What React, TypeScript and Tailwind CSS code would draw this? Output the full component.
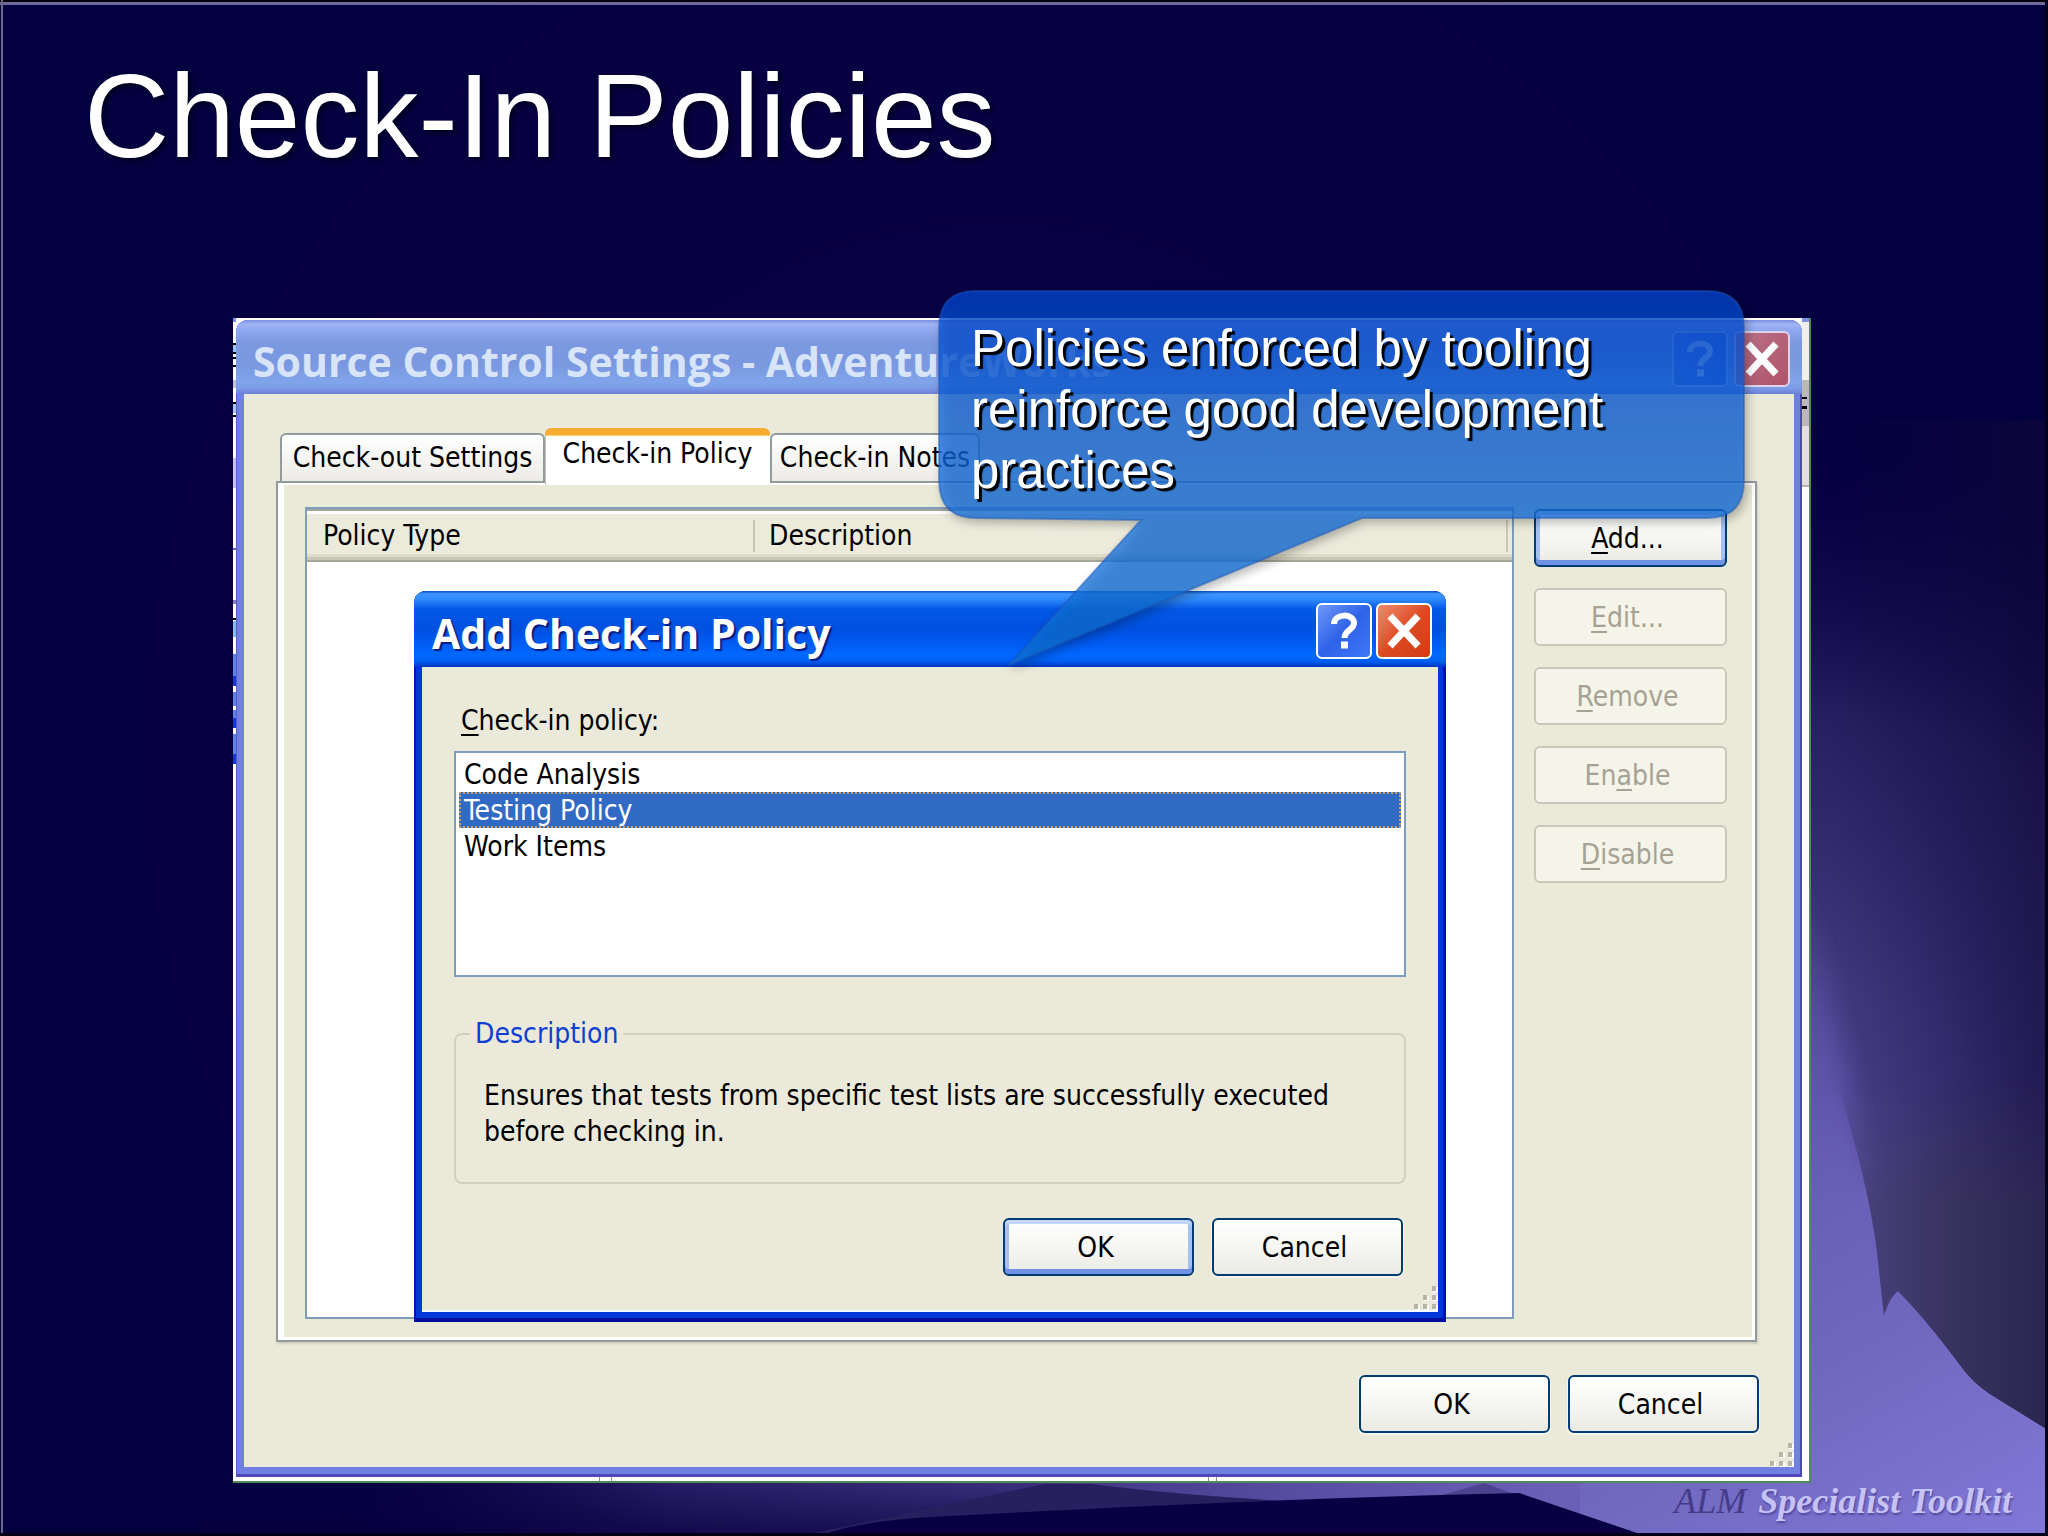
import { useState, type ReactNode } from "react";

const POLICIES = [
  { name: "Code Analysis", text: "Ensures that code analysis has been run with specific rules before checking in." },
  {
    name: "Testing Policy",
    text: "Ensures that tests from specific test lists are successfully executed before checking in.",
  },
  { name: "Work Items", text: "Ensures that work items are associated with the check-in." },
];

function Backdrop() {
  return (
    <svg
      className="absolute inset-0 h-full w-full"
      viewBox="0 0 2048 1536"
      preserveAspectRatio="none"
      aria-hidden="true"
    >
      <defs>
        <radialGradient id="mid" cx="1000" cy="760" r="950" gradientUnits="userSpaceOnUse">
          <stop offset="0" stopColor="#0c0048" />
          <stop offset="0.8" stopColor="#080041" />
          <stop offset="1" stopColor="#03003f" />
        </radialGradient>
        <radialGradient id="haze" cx="1790" cy="1220" r="780" gradientUnits="userSpaceOnUse">
          <stop offset="0" stopColor="#544c98" />
          <stop offset="0.3" stopColor="#423a80" />
          <stop offset="0.65" stopColor="#2a2262" stopOpacity="0.9" />
          <stop offset="1" stopColor="#0a0044" stopOpacity="0" />
        </radialGradient>
        <linearGradient id="shade" x1="1830" y1="0" x2="2048" y2="0" gradientUnits="userSpaceOnUse">
          <stop offset="0" stopColor="#120a40" stopOpacity="0" />
          <stop offset="1" stopColor="#100838" stopOpacity="0.6" />
        </linearGradient>
        <linearGradient id="slope" x1="1800" y1="1100" x2="2048" y2="1536" gradientUnits="userSpaceOnUse">
          <stop offset="0" stopColor="#635ab2" />
          <stop offset="0.5" stopColor="#7068be" />
          <stop offset="1" stopColor="#8278d8" />
        </linearGradient>
        <linearGradient id="light" x1="0" y1="840" x2="0" y2="1180" gradientUnits="userSpaceOnUse">
          <stop offset="0" stopColor="#665cb6" stopOpacity="0" />
          <stop offset="1" stopColor="#665cb6" />
        </linearGradient>
        <linearGradient id="slopeFade" x1="0" y1="1080" x2="0" y2="1200" gradientUnits="userSpaceOnUse">
          <stop offset="0" stopColor="#fff" stopOpacity="0" />
          <stop offset="1" stopColor="#fff" />
        </linearGradient>
        <mask id="fade" maskUnits="userSpaceOnUse" x="1400" y="1000" width="648" height="536">
          <rect x="1400" y="1000" width="648" height="536" fill="url(#slopeFade)" />
        </mask>
        <linearGradient id="hill" x1="1860" y1="0" x2="2048" y2="0" gradientUnits="userSpaceOnUse">
          <stop offset="0" stopColor="#48417c" />
          <stop offset="0.5" stopColor="#38325f" />
          <stop offset="1" stopColor="#2b2552" />
        </linearGradient>
        <linearGradient id="valley" x1="300" y1="0" x2="1040" y2="0" gradientUnits="userSpaceOnUse">
          <stop offset="0" stopColor="#0a0044" stopOpacity="0" />
          <stop offset="0.5" stopColor="#281e68" />
          <stop offset="1" stopColor="#3c3480" />
        </linearGradient>
        <linearGradient id="floor" x1="0" y1="1480" x2="0" y2="1536" gradientUnits="userSpaceOnUse">
          <stop offset="0" stopColor="#08003f" stopOpacity="0" />
          <stop offset="1" stopColor="#08003f" stopOpacity="0.7" />
        </linearGradient>
        <linearGradient id="ridge" x1="1040" y1="0" x2="1560" y2="0" gradientUnits="userSpaceOnUse">
          <stop offset="0" stopColor="#3c3480" />
          <stop offset="0.5" stopColor="#574ea4" />
          <stop offset="1" stopColor="#6a60b8" />
        </linearGradient>
        <filter id="soft" x="-20%" y="-20%" width="140%" height="140%">
          <feGaussianBlur stdDeviation="12" />
        </filter>
      </defs>
      <rect width="2048" height="1536" fill="#03003f" />
      <rect width="2048" height="1536" fill="url(#mid)" />
      <rect x="1500" y="420" width="548" height="1116" fill="url(#haze)" />
      <rect x="1830" y="420" width="218" height="1116" fill="url(#shade)" />
      <path d="M1780 850 C1835 960 1848 1110 1876 1230 L1880 1330 L1780 1330Z" fill="url(#light)" filter="url(#soft)" />
      <g mask="url(#fade)">
        <path
          d="M1780 1080 L1836 1080 Q1868 1180 1877 1252 L1884 1315 Q1890 1296 1898 1291 Q1925 1318 1960 1365 Q1972 1382 1990 1394 L2048 1430 V1536 H1500 V1480 H1780Z"
          fill="url(#slope)"
        />
        <path
          d="M1836 1080 Q1868 1180 1877 1252 L1884 1315 Q1890 1296 1898 1291 Q1925 1318 1960 1365 Q1972 1382 1990 1394 L2048 1430 V1080Z"
          fill="url(#hill)"
        />
      </g>
      <rect x="200" y="1480" width="900" height="56" fill="url(#valley)" />
      <rect x="200" y="1480" width="860" height="56" fill="url(#floor)" />
      <rect x="1040" y="1480" width="540" height="56" fill="url(#ridge)" />
      <path d="M1044 1484 L800 1536 H1300 V1502 Q1180 1495 1090 1484Z" fill="#281f5e" />
      <path d="M1425 1500 L1484 1483 L1525 1498Z" fill="#4c4390" />
      <path d="M820 1536 Q860 1520 950 1516 Q1280 1498 1519 1493 L1646 1536Z" fill="#080042" />
      <rect width="2048" height="2" fill="#04000c" />
      <rect y="2" width="2048" height="3" fill="#6f6a9c" />
      <rect x="1" width="2" height="1536" fill="#6c6a86" />
      <rect x="2045" width="3" height="1536" fill="#030018" />
      <rect y="1533" width="2048" height="3" fill="#030018" />
    </svg>
  );
}

function PushButton({
  children,
  look = "normal",
  width,
}: {
  children: ReactNode;
  look?: "normal" | "primary" | "disabled";
  width: string;
}) {
  const looks = {
    normal:
      "border-[#003c74] text-black bg-linear-to-b from-white via-[#f6f6f3] to-[#ebeae4] shadow-[0_1px_1px_1px_#f6f5ea]",
    primary:
      "border-[#003c74] text-black bg-linear-to-b from-white via-[#f6f6f3] to-[#ebeae4] shadow-[inset_0_4px_0_#c2d6f8,inset_0_-5px_0_#6f92e4,inset_4px_0_0_#a5c0f2,inset_-4px_0_0_#a5c0f2]",
    disabled: "border-[#c9c7ba] text-[#a5a295] bg-[#f5f4e8]",
  };
  return (
    <button
      type="button"
      disabled={look === "disabled"}
      className={`h-[58px] rounded-md border-2 pt-0.5 pr-1.5 leading-[36px] ${width} ${looks[look]}`}
    >
      {children}
    </button>
  );
}

function Key({ children }: { children: ReactNode }) {
  return <span className="underline decoration-2 underline-offset-4">{children}</span>;
}

function Grip() {
  const dots = [
    [18, 0],
    [9, 9],
    [18, 9],
    [0, 18],
    [9, 18],
    [18, 18],
  ];
  return (
    <svg className="absolute right-0 bottom-0 h-6 w-6" viewBox="0 0 24 24" aria-hidden="true">
      {dots.map(([x, y]) => (
        <g key={`${x}-${y}`}>
          <rect x={x + 1} y={y + 1} width="5" height="5" fill="#fff" />
          <rect x={x} y={y} width="4" height="5" fill="#b8b4a2" />
        </g>
      ))}
    </svg>
  );
}

function CaptionButton({ kind, active }: { kind: "help" | "close"; active: boolean }) {
  const tone =
    kind === "help"
      ? active
        ? "border-white bg-linear-to-br from-[#6f98f8] via-[#2f62e8] to-[#3f78f8]"
        : "border-[#b4c8f2] bg-linear-to-br from-[#5a7ae0] to-[#3a60e0]"
      : active
        ? "border-white bg-linear-to-br from-[#ee8a6c] via-[#dd4a22] to-[#d23c10]"
        : "border-[#dcd4ee] bg-linear-to-br from-[#b87088] to-[#b05468]";
  return (
    <button
      type="button"
      aria-label={kind === "help" ? "Help" : "Close"}
      className={`flex h-14 w-14 items-center justify-center rounded-md border-2 ${tone}`}
    >
      <svg
        className="h-10 w-10"
        viewBox="0 0 40 40"
        fill="none"
        stroke={active || kind === "close" ? "#fff" : "#d0dcf8"}
        aria-hidden="true"
      >
        {kind === "help" ? (
          <>
            <path d="M10 13 C10 2 30 2 30 12 C30 19 20.500 19 20.500 27" strokeWidth="6" />
            <path d="M17 34 H24" strokeWidth="7" />
          </>
        ) : (
          <path d="M6 5 L34 35 M34 5 L6 35" strokeWidth="7" />
        )}
      </svg>
    </button>
  );
}

function FrameEdges() {
  const blacks = [25, 34, 39, 47, 84, 97, 300];
  return (
    <>
      <svg className="absolute top-0 left-0 h-[460px] w-[3px]" viewBox="0 0 3 460" aria-hidden="true">
        <rect y="0" width="3" height="4" fill="#7b90e0" />
        {blacks.map((y) => (
          <rect key={y} y={y} width="3" height="2" fill="#000" />
        ))}
        <rect y="27" width="3" height="7" fill="#9cc4f0" />
        <rect y="62" width="3" height="8" fill="#c4c0e0" />
        <rect y="86" width="3" height="9" fill="#a8c8f4" />
        <rect y="140" width="3" height="30" fill="#c8c4d8" />
        <rect y="230" width="3" height="2" fill="#6c5cc0" />
        <rect y="282" width="3" height="4" fill="#8a80c4" />
        <rect y="303" width="3" height="16" fill="#86bce8" />
        {[336, 350, 374, 392, 416, 428].map((y) => (
          <rect key={y} y={y} width="3" height="14" fill="#5c84e8" />
        ))}
        {[358, 400, 436].map((y) => (
          <rect key={y} y={y} width="3" height="10" fill="#1438d8" />
        ))}
      </svg>
      <svg className="absolute top-0 right-0 h-[170px] w-[7px]" viewBox="0 0 7 170" aria-hidden="true">
        <rect width="7" height="4" fill="#7b90e0" />
        <rect y="4" width="7" height="60" fill="#f0efe8" />
        <rect y="62" width="7" height="46" fill="#bcbab0" />
        <rect y="79" width="5" height="2" fill="#000" />
        <rect y="88" width="5" height="3" fill="#000" />
        <rect y="108" width="7" height="60" fill="#e4e0d4" />
        <rect y="167" width="7" height="2" fill="#b8b4a4" />
      </svg>
      <svg className="absolute bottom-0 left-[366px] h-[4px] w-[620px]" viewBox="0 0 620 4" aria-hidden="true">
        {[0, 12, 609, 617].map((x) => (
          <rect key={x} x={x} width="1" height="4" fill="#8a90a0" />
        ))}
      </svg>
    </>
  );
}

function AddPolicyDialog() {
  const [selected, setSelected] = useState(1);
  return (
    <div
      role="dialog"
      aria-label="Add Check-in Policy"
      className="absolute top-[271px] left-[178px] w-[1032px] rounded-t-xl bg-[#0038d8] px-2 pb-2.5 shadow-[inset_2px_0_0_#0018a8,inset_-3px_0_0_#0014a0,inset_0_-4px_0_#00109c]"
    >
      <div className="-mx-2 flex h-[76px] items-center justify-between rounded-t-xl bg-[linear-gradient(180deg,#0a50c8_0%,#3c96ff_4%,#2c86fa_12%,#0458e6_24%,#0050e0_50%,#005cf4_70%,#0068ff_84%,#0060f4_92%,#0038c0_100%)] pt-1 pr-3.5 pl-[18px]">
        <h3 className="pt-1 font-['Open_Sans',sans-serif] text-[41px] leading-[48px] font-bold text-white [text-shadow:2px_2px_1px_#0a1c80]">
          Add Check-in Policy
        </h3>
        <div className="flex gap-1">
          <CaptionButton kind="help" active />
          <CaptionButton kind="close" active />
        </div>
      </div>
      <div className="relative border-b-2 border-[#f4f8ff] bg-[#ebe9d9] px-8 pt-9 pb-[34px]">
        <p id="policy-label" className="leading-[36px]">
          <span className="pl-[7px]">
            <Key>C</Key>heck-in policy:
          </span>
        </p>
        <ul
          role="listbox"
          aria-labelledby="policy-label"
          className="mt-3 h-[226px] border-2 border-[#7f9db9] bg-white p-[3px]"
        >
          {POLICIES.map((policy, i) => (
            <li key={policy.name} role="option" aria-selected={i === selected}>
              <button
                type="button"
                onClick={() => setSelected(i)}
                className={
                  i === selected
                    ? "block h-9 w-full bg-[#316ac5] pl-[5px] text-left leading-[38px] text-white outline-2 -outline-offset-2 outline-dotted outline-[#c8a060]"
                    : "block h-9 w-full pl-[5px] text-left leading-[38px]"
                }
              >
                {policy.name}
              </button>
            </li>
          ))}
        </ul>
        <fieldset className="mt-[39px] rounded-lg border-2 border-[#d2d0c0] px-3.5 pb-8">
          <legend className="px-[5px] leading-[36px] text-[#0f3fd2]">Description</legend>
          <p className="max-w-[900px] pt-[26px] pl-3.5 leading-[36px]">{POLICIES[selected].text}</p>
        </fieldset>
        <div className="mt-[34px] flex justify-end gap-[18px] pr-[3px]">
          <PushButton look="primary" width="w-[191px]">
            OK
          </PushButton>
          <PushButton width="w-[191px]">Cancel</PushButton>
        </div>
        <Grip />
      </div>
    </div>
  );
}

function SettingsWindow() {
  const tab = "h-12 rounded-t-md border-2 border-b-0 border-[#919b9c] bg-linear-to-b from-white to-[#ecebe6] leading-[46px]";
  return (
    <div
      role="dialog"
      aria-label="Source Control Settings - AdventureWorks"
      className="relative mx-[3px] rounded-t-xl bg-[#7080e0] px-2 pb-2.5 shadow-[inset_1px_0_0_#5858c8,inset_-2px_0_0_#4c48b8,inset_0_-3px_0_#5048b8]"
    >
      <div className="-mx-2 flex h-[74px] items-center justify-between rounded-t-xl bg-[linear-gradient(180deg,#7c90e4_0%,#a0b4f4_6%,#92aaf0_12%,#7b98e0_30%,#7a98e0_60%,#80a4ea_84%,#7c9ce8_92%,#6c80d8_100%)] pt-1 pr-3 pl-[17px]">
        <h2 className="pt-1 font-['Open_Sans',sans-serif] text-[41px] leading-[48px] font-bold text-[#d8e4f8]">
          Source Control Settings - AdventureWorks
        </h2>
        <div className="flex gap-1.5">
          <CaptionButton kind="help" active={false} />
          <CaptionButton kind="close" active={false} />
        </div>
      </div>
      <div className="relative bg-[#ebe9d9] px-8 pt-[34px] pb-[34px]">
        <div role="tablist" className="flex h-[53px] items-end pl-1">
          <button type="button" role="tab" aria-selected="false" className={`${tab} w-[265px]`}>
            Check-out Settings
          </button>
          <button
            type="button"
            role="tab"
            aria-selected="true"
            className="z-10 -mb-1 h-[57px] w-[225px] rounded-t-md border-t-[7px] border-[#f5ac30] bg-white pb-3 leading-[38px] shadow-[inset_1px_0_0_#c4c4bc,inset_0_1px_0_#fcd070]"
          >
            Check-in Policy
          </button>
          <button type="button" role="tab" aria-selected="false" className={`${tab} w-[210px]`}>
            Check-in Notes
          </button>
        </div>
        <div
          role="tabpanel"
          className="mr-[5px] border-2 border-[#919b9c] bg-white pt-0.5 pr-[3px] pb-[3px] pl-1.5 shadow-[1px_2px_2px_#cfcdbd]"
        >
          <div className="flex gap-5 bg-[#eaead9] pt-[22px] pr-[25px] pb-[18px] pl-[21px]">
            <div className="min-h-[812px] flex-1 border-2 border-[#7f9db9] bg-white">
              <table className="w-full table-fixed border-collapse text-left">
                <thead>
                  <tr className="h-[53px] bg-[#ebeadb] shadow-[inset_0_2px_0_#a0a4a0,inset_0_5px_0_#fff,inset_0_-2px_0_#a8a698,inset_0_-5px_0_#cbc7b8,inset_0_-8px_0_#dedccb]">
                    <th className="w-[448px] pl-4 font-normal">
                      <span className="block border-r-2 border-[#c8c6b6] leading-[32px]">Policy Type</span>
                    </th>
                    <th className="pl-3.5 font-normal">
                      <span className="mr-1 block border-r-2 border-[#c8c6b6] leading-[32px]">Description</span>
                    </th>
                  </tr>
                </thead>
              </table>
            </div>
            <div className="flex flex-col gap-[21px] pt-0.5">
              <PushButton look="primary" width="w-[193px]">
                <Key>A</Key>dd...
              </PushButton>
              <PushButton look="disabled" width="w-[193px]">
                <Key>E</Key>dit...
              </PushButton>
              <PushButton look="disabled" width="w-[193px]">
                <Key>R</Key>emove
              </PushButton>
              <PushButton look="disabled" width="w-[193px]">
                En<Key>a</Key>ble
              </PushButton>
              <PushButton look="disabled" width="w-[193px]">
                <Key>D</Key>isable
              </PushButton>
            </div>
          </div>
        </div>
        <div className="mt-[33px] flex justify-end gap-[18px] pr-[3px]">
          <PushButton width="w-[191px]">OK</PushButton>
          <PushButton width="w-[191px]">Cancel</PushButton>
        </div>
        <Grip />
      </div>
      <AddPolicyDialog />
    </div>
  );
}

function Callout() {
  return (
    <aside className="absolute -top-7 left-[705px] z-20 h-[380px] w-[807px]">
      <svg
        className="absolute inset-0 h-full w-full overflow-visible drop-shadow-[3px_4px_5px_rgba(0,0,0,0.35)]"
        viewBox="0 0 807 380"
        preserveAspectRatio="none"
        aria-hidden="true"
      >
        <defs>
          <linearGradient id="bubble" x1="0" y1="0" x2="0" y2="380" gradientUnits="userSpaceOnUse">
            <stop offset="0" stopColor="#0044d4" />
            <stop offset="0.3" stopColor="#0c62de" />
            <stop offset="0.6" stopColor="#1470de" />
            <stop offset="1" stopColor="#0c70d4" />
          </linearGradient>
        </defs>
        <path
          d="M38 1 H769 Q806 1 806 38 V190 Q806 228 769 228 H424 L71 375 L203 230 L38 228 Q1 228 1 190 V38 Q1 1 38 1Z"
          fill="url(#bubble)"
          fillOpacity="0.75"
          stroke="#1c58b8"
          strokeOpacity="0.5"
          strokeWidth="2"
        />
      </svg>
      <p className="relative w-[700px] pt-7 pl-[33px] font-['Liberation_Sans',Arial,sans-serif] text-[51px] leading-[61px] text-white [text-shadow:3px_3px_1px_#000]">
        Policies enforced by tooling reinforce good development practices
      </p>
    </aside>
  );
}

export default function App() {
  return (
    <main className="relative min-h-screen overflow-hidden bg-[#03003f] font-['DejaVu_Sans_Condensed','DejaVu_Sans',sans-serif] text-[28px] text-black">
      <Backdrop />
      <h1 className="relative pt-14 pb-[142px] pl-[84px] font-['Liberation_Sans',Arial,sans-serif] text-[118px] leading-[120px] text-white [text-shadow:3px_3px_5px_#000020]">
        Check-In Policies
      </h1>
      <section className="relative mr-[237px] ml-[233px] border-r-2 border-b-2 border-[#4f8a58] bg-white pt-0.5 pr-1 pb-1">
        <FrameEdges />
        <SettingsWindow />
        <Callout />
      </section>
      <footer className="relative flex justify-end gap-3 pr-9 font-['Liberation_Serif',serif] text-[36px] leading-[36px] italic">
        <span className="text-[#453c88]">ALM</span>
        <span className="font-bold text-[#c6c2f4] [text-shadow:1px_2px_2px_#5048a0]">Specialist Toolkit</span>
      </footer>
    </main>
  );
}
